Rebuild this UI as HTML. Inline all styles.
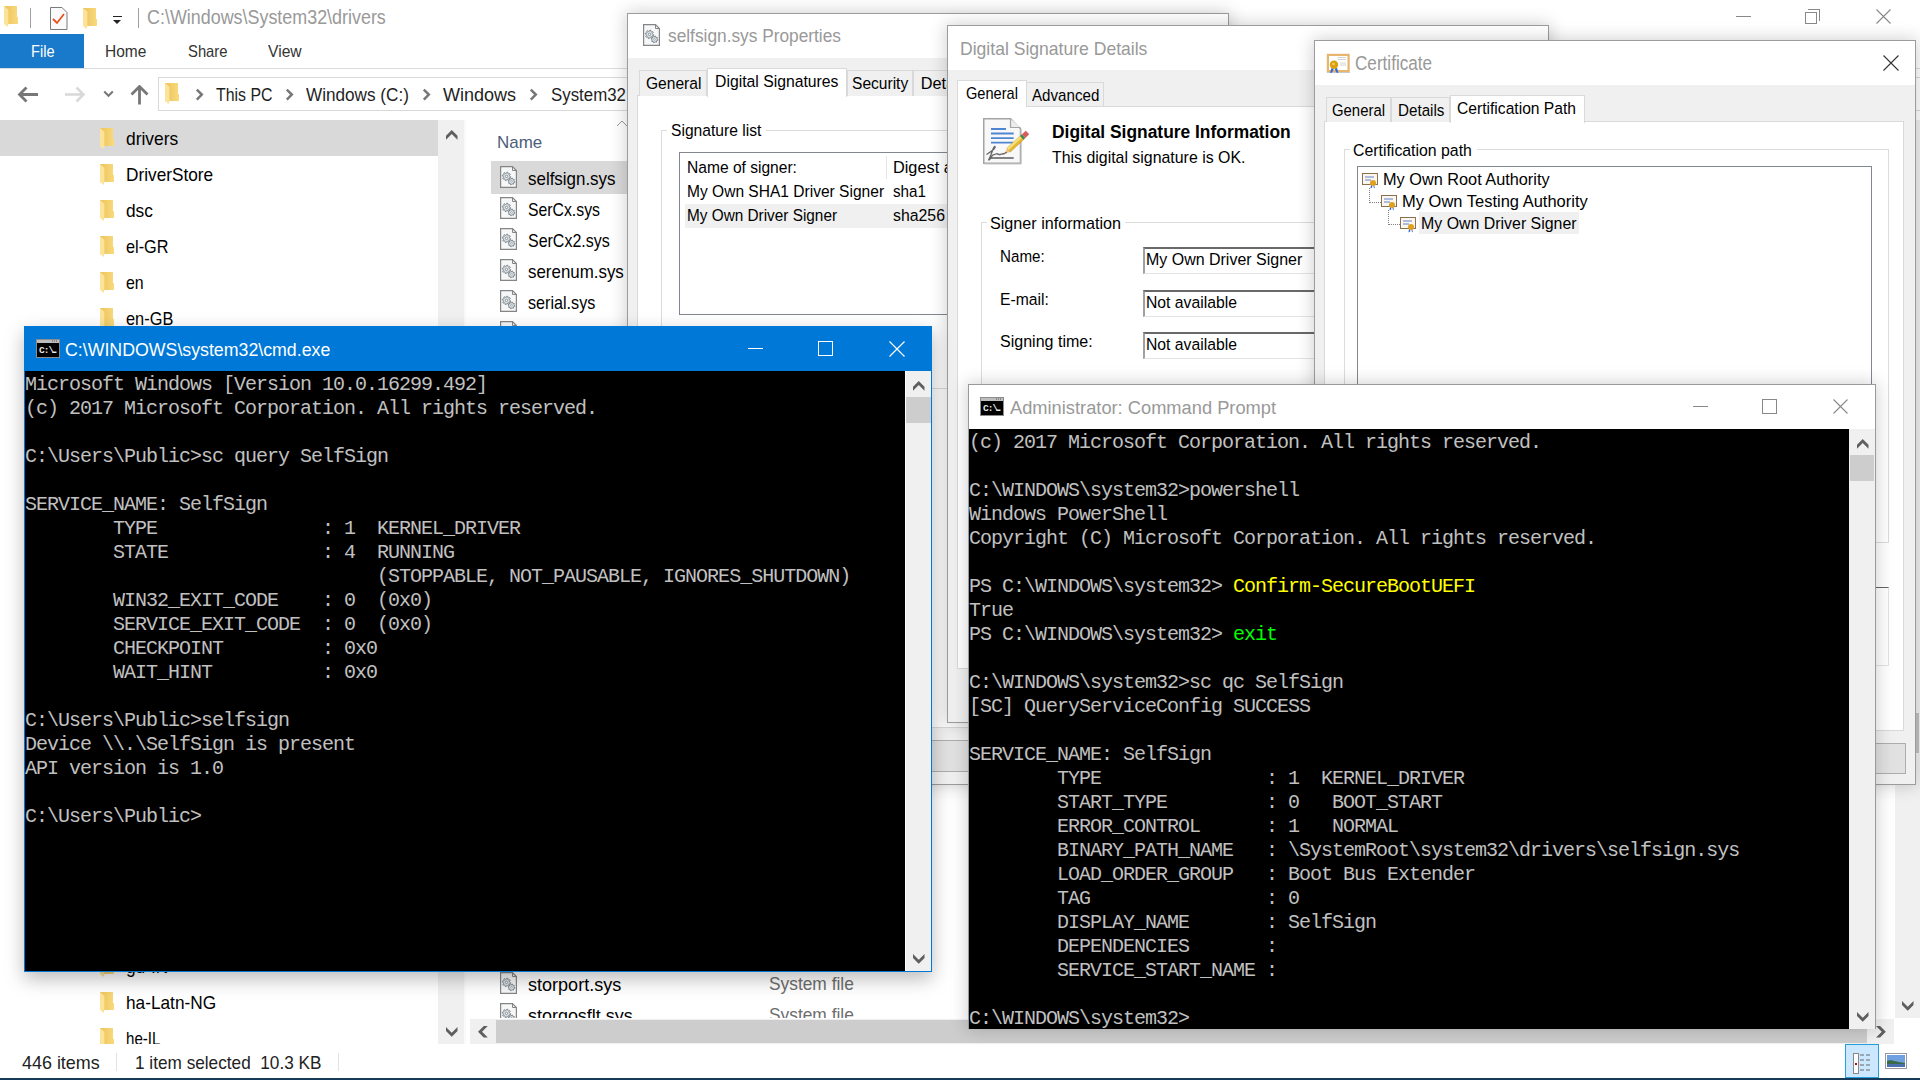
<!DOCTYPE html><html><head><meta charset="utf-8"><style>
*{box-sizing:border-box;margin:0;padding:0}
html,body{width:1920px;height:1080px;overflow:hidden;background:#fff;font-family:"Liberation Sans",sans-serif;color:#000}
.a{position:absolute}
.t{position:absolute;white-space:pre;line-height:1}
.con{position:absolute;font-family:"Liberation Mono",monospace;font-size:20px;letter-spacing:-1px;color:#c0c0c0;white-space:pre;line-height:24px}
.win{position:absolute;background:#f0f0f0;border:1px solid #9c9c9c;box-shadow:0 0 16px 1px rgba(0,0,0,.19);overflow:hidden}
</style></head><body>
<svg width="0" height="0" style="position:absolute"><defs><linearGradient id="fg" x1="0" x2="1"><stop offset="0" stop-color="#ebc35c"/><stop offset="1" stop-color="#f9da7c"/></linearGradient></defs></svg>
<svg class="a" style="left:4px;top:6px" width="15" height="22" viewBox="0 0 15 22"><path d="M0 0H13V11H14V18H0Z" fill="url(#fg)"/><path d="M0 0L4.6 4V17.6L3.6 21L0 18Z" fill="#fde39a"/><path d="M4.6 4V17.6" stroke="#f0cf70" stroke-width="0.6"/></svg>
<div class="a" style="left:30px;top:8px;width:1px;height:20px;background:#a0a0a0"></div>
<svg class="a" style="left:50px;top:7px" width="18" height="23" viewBox="0 0 18 23"><path d="M0.5 0.5H12L17 5.5V22.5H0.5Z" fill="#fafafa" stroke="#7a7a7a"/><path d="M3 12L7 16L14 7" stroke="#e8501e" stroke-width="1.8" fill="none"/></svg>
<svg class="a" style="left:83px;top:8px" width="15" height="22" viewBox="0 0 15 22"><path d="M0 0H13V11H14V18H0Z" fill="url(#fg)"/><path d="M0 0L4.6 4V17.6L3.6 21L0 18Z" fill="#fde39a"/><path d="M4.6 4V17.6" stroke="#f0cf70" stroke-width="0.6"/></svg>
<div class="a" style="left:113px;top:16px;width:9px;height:1.1999999999999993px;background:#222"></div>
<div class="a" style="left:113px;top:19.5px;width:0;height:0;border-left:4.5px solid transparent;border-right:4.5px solid transparent;border-top:4.5px solid #222"></div>
<div class="a" style="left:138px;top:8px;width:1px;height:20px;background:#a0a0a0"></div>
<div class="t" style="left:146.50px;top:7.89px;font-size:19.5px;color:#999;transform:scaleX(0.9182);transform-origin:0 0;">C:\Windows\System32\drivers</div>
<div class="a" style="left:1736px;top:16px;width:15px;height:1px;background:#888"></div>
<div class="a" style="left:1805px;top:12px;width:12px;height:12px;border:1px solid #888"></div>
<div class="a" style="left:1808px;top:9px;width:12px;height:12px;border-top:1px solid #888;border-right:1px solid #888"></div>
<svg class="a" style="left:1876px;top:9px" width="15" height="15" viewBox="0 0 15 15"><path d="M0.5 0.5L14.5 14.5M14.5 0.5L0.5 14.5" stroke="#888" stroke-width="1.1"/></svg>
<div class="a" style="left:0px;top:34px;width:84px;height:34px;background:#1979ca"></div>
<div class="t" style="left:30.50px;top:43.23px;font-size:16.5px;color:#fff;transform:scaleX(0.8833);transform-origin:0 0;">File</div>
<div class="t" style="left:104.50px;top:43.23px;font-size:16.5px;color:#333;transform:scaleX(0.9383);transform-origin:0 0;">Home</div>
<div class="t" style="left:187.50px;top:43.23px;font-size:16.5px;color:#333;transform:scaleX(0.8974);transform-origin:0 0;">Share</div>
<div class="t" style="left:268.00px;top:43.23px;font-size:16.5px;color:#333;transform:scaleX(0.9489);transform-origin:0 0;">View</div>
<div class="a" style="left:0px;top:68px;width:1920px;height:1px;background:#dadbdc"></div>
<svg class="a" style="left:17px;top:85px" width="140" height="22" viewBox="0 0 140 22"><path d="M3 9.5H21M9.5 2.5L2.5 9.5L9.5 16.5" stroke="#777" stroke-width="2.8" fill="none"/><path d="M48 9.5H66M59.5 2.5L66.5 9.5L59.5 16.5" stroke="#d9d9d9" stroke-width="2.6" fill="none"/><path d="M87.2 6.5L91.5 10.8L95.8 6.5" stroke="#777" stroke-width="2" fill="none"/><path d="M122.5 19.5V2M114.5 9.5L122.5 1.5L130.5 9.5" stroke="#777" stroke-width="2.8" fill="none"/></svg>
<div class="a" style="left:158px;top:77px;width:1802px;height:34px;border:1px solid #d9d9d9"></div>
<svg class="a" style="left:165px;top:83px" width="15" height="22" viewBox="0 0 15 22"><path d="M0 0H13V11H14V18H0Z" fill="url(#fg)"/><path d="M0 0L4.6 4V17.6L3.6 21L0 18Z" fill="#fde39a"/><path d="M4.6 4V17.6" stroke="#f0cf70" stroke-width="0.6"/></svg>
<svg class="a" style="left:195px;top:88px" width="10" height="13" viewBox="0 0 10 13"><path d="M1.8 1.6L6.8 6.6L1.8 11.6" stroke="#777" stroke-width="2.5" fill="none"/></svg>
<svg class="a" style="left:284.5px;top:88px" width="10" height="13" viewBox="0 0 10 13"><path d="M1.8 1.6L6.8 6.6L1.8 11.6" stroke="#777" stroke-width="2.5" fill="none"/></svg>
<svg class="a" style="left:422px;top:88px" width="10" height="13" viewBox="0 0 10 13"><path d="M1.8 1.6L6.8 6.6L1.8 11.6" stroke="#777" stroke-width="2.5" fill="none"/></svg>
<svg class="a" style="left:529px;top:88px" width="10" height="13" viewBox="0 0 10 13"><path d="M1.8 1.6L6.8 6.6L1.8 11.6" stroke="#777" stroke-width="2.5" fill="none"/></svg>
<div class="t" style="left:216.00px;top:86.09px;font-size:18.8px;color:#1e1e1e;transform:scaleX(0.8448);transform-origin:0 0;">This PC</div>
<div class="t" style="left:306.40px;top:86.09px;font-size:18.8px;color:#1e1e1e;transform:scaleX(0.9131);transform-origin:0 0;">Windows (C:)</div>
<div class="t" style="left:443.10px;top:86.09px;font-size:18.8px;color:#1e1e1e;transform:scaleX(0.9596);transform-origin:0 0;">Windows</div>
<div class="t" style="left:550.60px;top:86.09px;font-size:18.8px;color:#1e1e1e;transform:scaleX(0.8970);transform-origin:0 0;">System32</div>
<div class="a" style="left:0px;top:120px;width:438px;height:36px;background:#d9d9d9"></div>
<div class="a" style="left:438px;top:120px;width:26px;height:925px;background:#f0f0f0"></div>
<div class="a" style="left:464px;top:120px;width:2px;height:925px;background:#fafafa"></div>
<svg class="a" style="left:446px;top:130px" width="12" height="10" viewBox="0 0 12 10"><path d="M0 5.75L5.75 0L11.5 5.75V9.8L5.75 4.05L0 9.8Z" fill="#5f5f5f"/></svg>
<svg class="a" style="left:446px;top:1027px" width="12" height="10" viewBox="0 0 12 10"><path d="M0 4.05L5.75 9.8L11.5 4.05V0L5.75 5.75L0 0Z" fill="#5f5f5f"/></svg>
<svg class="a" style="left:100px;top:128px" width="15" height="22" viewBox="0 0 15 22"><path d="M0 0H13V11H14V18H0Z" fill="url(#fg)"/><path d="M0 0L4.6 4V17.6L3.6 21L0 18Z" fill="#fde39a"/><path d="M4.6 4V17.6" stroke="#f0cf70" stroke-width="0.6"/></svg>
<div class="t" style="left:125.50px;top:128.82px;font-size:19px;color:#000;transform:scaleX(0.9158);transform-origin:0 0;">drivers</div>
<svg class="a" style="left:100px;top:164px" width="15" height="22" viewBox="0 0 15 22"><path d="M0 0H13V11H14V18H0Z" fill="url(#fg)"/><path d="M0 0L4.6 4V17.6L3.6 21L0 18Z" fill="#fde39a"/><path d="M4.6 4V17.6" stroke="#f0cf70" stroke-width="0.6"/></svg>
<div class="t" style="left:125.50px;top:164.82px;font-size:19px;color:#000;transform:scaleX(0.9075);transform-origin:0 0;">DriverStore</div>
<svg class="a" style="left:100px;top:200px" width="15" height="22" viewBox="0 0 15 22"><path d="M0 0H13V11H14V18H0Z" fill="url(#fg)"/><path d="M0 0L4.6 4V17.6L3.6 21L0 18Z" fill="#fde39a"/><path d="M4.6 4V17.6" stroke="#f0cf70" stroke-width="0.6"/></svg>
<div class="t" style="left:125.50px;top:200.82px;font-size:19px;color:#000;transform:scaleX(0.9105);transform-origin:0 0;">dsc</div>
<svg class="a" style="left:100px;top:236px" width="15" height="22" viewBox="0 0 15 22"><path d="M0 0H13V11H14V18H0Z" fill="url(#fg)"/><path d="M0 0L4.6 4V17.6L3.6 21L0 18Z" fill="#fde39a"/><path d="M4.6 4V17.6" stroke="#f0cf70" stroke-width="0.6"/></svg>
<div class="t" style="left:125.50px;top:236.82px;font-size:19px;color:#000;transform:scaleX(0.8562);transform-origin:0 0;">el-GR</div>
<svg class="a" style="left:100px;top:272px" width="15" height="22" viewBox="0 0 15 22"><path d="M0 0H13V11H14V18H0Z" fill="url(#fg)"/><path d="M0 0L4.6 4V17.6L3.6 21L0 18Z" fill="#fde39a"/><path d="M4.6 4V17.6" stroke="#f0cf70" stroke-width="0.6"/></svg>
<div class="t" style="left:125.50px;top:272.82px;font-size:19px;color:#000;transform:scaleX(0.8374);transform-origin:0 0;">en</div>
<svg class="a" style="left:100px;top:308px" width="15" height="22" viewBox="0 0 15 22"><path d="M0 0H13V11H14V18H0Z" fill="url(#fg)"/><path d="M0 0L4.6 4V17.6L3.6 21L0 18Z" fill="#fde39a"/><path d="M4.6 4V17.6" stroke="#f0cf70" stroke-width="0.6"/></svg>
<div class="t" style="left:125.50px;top:308.82px;font-size:19px;color:#000;transform:scaleX(0.8614);transform-origin:0 0;">en-GB</div>
<svg class="a" style="left:100px;top:956px" width="15" height="22" viewBox="0 0 15 22"><path d="M0 0H13V11H14V18H0Z" fill="url(#fg)"/><path d="M0 0L4.6 4V17.6L3.6 21L0 18Z" fill="#fde39a"/><path d="M4.6 4V17.6" stroke="#f0cf70" stroke-width="0.6"/></svg>
<div class="t" style="left:125.50px;top:956.82px;font-size:19px;color:#000;transform:scaleX(0.91);transform-origin:0 0">gu-IN</div>
<svg class="a" style="left:100px;top:992px" width="15" height="22" viewBox="0 0 15 22"><path d="M0 0H13V11H14V18H0Z" fill="url(#fg)"/><path d="M0 0L4.6 4V17.6L3.6 21L0 18Z" fill="#fde39a"/><path d="M4.6 4V17.6" stroke="#f0cf70" stroke-width="0.6"/></svg>
<div class="t" style="left:125.50px;top:992.82px;font-size:19px;color:#000;transform:scaleX(0.9076);transform-origin:0 0;">ha-Latn-NG</div>
<svg class="a" style="left:100px;top:1028px" width="15" height="22" viewBox="0 0 15 22"><path d="M0 0H13V11H14V18H0Z" fill="url(#fg)"/><path d="M0 0L4.6 4V17.6L3.6 21L0 18Z" fill="#fde39a"/><path d="M4.6 4V17.6" stroke="#f0cf70" stroke-width="0.6"/></svg>
<div class="t" style="left:125.50px;top:1028.82px;font-size:19px;color:#000;transform:scaleX(0.7941);transform-origin:0 0;">he-IL</div>
<div class="a" style="left:0px;top:1044px;width:468px;height:34px;background:#fff"></div>
<div class="t" style="left:497.20px;top:134.21px;font-size:17px;color:#4c607a;transform:scaleX(0.9967);transform-origin:0 0;">Name</div>
<svg class="a" style="left:616px;top:119px" width="12" height="8" viewBox="0 0 12 8"><path d="M1 7L6 2L11 7" stroke="#999" stroke-width="1" fill="none"/></svg>
<div class="a" style="left:491px;top:161px;width:169px;height:33px;background:#d9d9d9"></div>
<svg class="a" style="left:500px;top:166px" width="18" height="23" viewBox="0 0 18 23"><path d="M0.6 0.6H12.5L16.4 4.5V21.4H0.6Z" fill="#f6f7f8" stroke="#858585" stroke-width="1.2"/><path d="M12.5 0.6V4.5H16.4" fill="none" stroke="#858585" stroke-width="1"/><path d="M10.78 10.82 L10.61 11.65 L9.23 11.86 L8.90 12.37 L9.23 13.72 L8.53 14.19 L7.40 13.37 L6.80 13.49 L6.08 14.68 L5.25 14.51 L5.04 13.13 L4.53 12.80 L3.18 13.13 L2.71 12.43 L3.53 11.30 L3.41 10.70 L2.22 9.98 L2.39 9.15 L3.77 8.94 L4.10 8.43 L3.77 7.08 L4.47 6.61 L5.60 7.43 L6.20 7.31 L6.92 6.12 L7.75 6.29 L7.96 7.67 L8.47 8.00 L9.82 7.67 L10.29 8.37 L9.47 9.50 L9.59 10.10Z" fill="#d6e4ee" stroke="#7c7c7c" stroke-width="0.9"/><circle cx="6.5" cy="10.4" r="1.2" fill="#fff" stroke="#7c7c7c" stroke-width="0.8"/><path d="M14.88 15.73 L14.75 16.39 L13.70 16.58 L13.43 16.99 L13.66 18.03 L13.10 18.40 L12.23 17.79 L11.75 17.89 L11.17 18.78 L10.51 18.65 L10.32 17.60 L9.91 17.33 L8.87 17.56 L8.50 17.00 L9.11 16.13 L9.01 15.65 L8.12 15.07 L8.25 14.41 L9.30 14.22 L9.57 13.81 L9.34 12.77 L9.90 12.40 L10.77 13.01 L11.25 12.91 L11.83 12.02 L12.49 12.15 L12.68 13.20 L13.09 13.47 L14.13 13.24 L14.50 13.80 L13.89 14.67 L13.99 15.15Z" fill="#d6e8f4" stroke="#7c7c7c" stroke-width="0.9"/><circle cx="11.5" cy="15.4" r="0.9" fill="#fff" stroke="#888" stroke-width="0.6"/></svg>
<div class="t" style="left:527.50px;top:168.82px;font-size:19px;color:#000;transform:scaleX(0.8912);transform-origin:0 0;">selfsign.sys</div>
<svg class="a" style="left:500px;top:197px" width="18" height="23" viewBox="0 0 18 23"><path d="M0.6 0.6H12.5L16.4 4.5V21.4H0.6Z" fill="#f6f7f8" stroke="#858585" stroke-width="1.2"/><path d="M12.5 0.6V4.5H16.4" fill="none" stroke="#858585" stroke-width="1"/><path d="M10.78 10.82 L10.61 11.65 L9.23 11.86 L8.90 12.37 L9.23 13.72 L8.53 14.19 L7.40 13.37 L6.80 13.49 L6.08 14.68 L5.25 14.51 L5.04 13.13 L4.53 12.80 L3.18 13.13 L2.71 12.43 L3.53 11.30 L3.41 10.70 L2.22 9.98 L2.39 9.15 L3.77 8.94 L4.10 8.43 L3.77 7.08 L4.47 6.61 L5.60 7.43 L6.20 7.31 L6.92 6.12 L7.75 6.29 L7.96 7.67 L8.47 8.00 L9.82 7.67 L10.29 8.37 L9.47 9.50 L9.59 10.10Z" fill="#d6e4ee" stroke="#7c7c7c" stroke-width="0.9"/><circle cx="6.5" cy="10.4" r="1.2" fill="#fff" stroke="#7c7c7c" stroke-width="0.8"/><path d="M14.88 15.73 L14.75 16.39 L13.70 16.58 L13.43 16.99 L13.66 18.03 L13.10 18.40 L12.23 17.79 L11.75 17.89 L11.17 18.78 L10.51 18.65 L10.32 17.60 L9.91 17.33 L8.87 17.56 L8.50 17.00 L9.11 16.13 L9.01 15.65 L8.12 15.07 L8.25 14.41 L9.30 14.22 L9.57 13.81 L9.34 12.77 L9.90 12.40 L10.77 13.01 L11.25 12.91 L11.83 12.02 L12.49 12.15 L12.68 13.20 L13.09 13.47 L14.13 13.24 L14.50 13.80 L13.89 14.67 L13.99 15.15Z" fill="#d6e8f4" stroke="#7c7c7c" stroke-width="0.9"/><circle cx="11.5" cy="15.4" r="0.9" fill="#fff" stroke="#888" stroke-width="0.6"/></svg>
<div class="t" style="left:527.50px;top:199.82px;font-size:19px;color:#000;transform:scaleX(0.8308);transform-origin:0 0;">SerCx.sys</div>
<svg class="a" style="left:500px;top:228px" width="18" height="23" viewBox="0 0 18 23"><path d="M0.6 0.6H12.5L16.4 4.5V21.4H0.6Z" fill="#f6f7f8" stroke="#858585" stroke-width="1.2"/><path d="M12.5 0.6V4.5H16.4" fill="none" stroke="#858585" stroke-width="1"/><path d="M10.78 10.82 L10.61 11.65 L9.23 11.86 L8.90 12.37 L9.23 13.72 L8.53 14.19 L7.40 13.37 L6.80 13.49 L6.08 14.68 L5.25 14.51 L5.04 13.13 L4.53 12.80 L3.18 13.13 L2.71 12.43 L3.53 11.30 L3.41 10.70 L2.22 9.98 L2.39 9.15 L3.77 8.94 L4.10 8.43 L3.77 7.08 L4.47 6.61 L5.60 7.43 L6.20 7.31 L6.92 6.12 L7.75 6.29 L7.96 7.67 L8.47 8.00 L9.82 7.67 L10.29 8.37 L9.47 9.50 L9.59 10.10Z" fill="#d6e4ee" stroke="#7c7c7c" stroke-width="0.9"/><circle cx="6.5" cy="10.4" r="1.2" fill="#fff" stroke="#7c7c7c" stroke-width="0.8"/><path d="M14.88 15.73 L14.75 16.39 L13.70 16.58 L13.43 16.99 L13.66 18.03 L13.10 18.40 L12.23 17.79 L11.75 17.89 L11.17 18.78 L10.51 18.65 L10.32 17.60 L9.91 17.33 L8.87 17.56 L8.50 17.00 L9.11 16.13 L9.01 15.65 L8.12 15.07 L8.25 14.41 L9.30 14.22 L9.57 13.81 L9.34 12.77 L9.90 12.40 L10.77 13.01 L11.25 12.91 L11.83 12.02 L12.49 12.15 L12.68 13.20 L13.09 13.47 L14.13 13.24 L14.50 13.80 L13.89 14.67 L13.99 15.15Z" fill="#d6e8f4" stroke="#7c7c7c" stroke-width="0.9"/><circle cx="11.5" cy="15.4" r="0.9" fill="#fff" stroke="#888" stroke-width="0.6"/></svg>
<div class="t" style="left:527.50px;top:230.82px;font-size:19px;color:#000;transform:scaleX(0.8411);transform-origin:0 0;">SerCx2.sys</div>
<svg class="a" style="left:500px;top:259px" width="18" height="23" viewBox="0 0 18 23"><path d="M0.6 0.6H12.5L16.4 4.5V21.4H0.6Z" fill="#f6f7f8" stroke="#858585" stroke-width="1.2"/><path d="M12.5 0.6V4.5H16.4" fill="none" stroke="#858585" stroke-width="1"/><path d="M10.78 10.82 L10.61 11.65 L9.23 11.86 L8.90 12.37 L9.23 13.72 L8.53 14.19 L7.40 13.37 L6.80 13.49 L6.08 14.68 L5.25 14.51 L5.04 13.13 L4.53 12.80 L3.18 13.13 L2.71 12.43 L3.53 11.30 L3.41 10.70 L2.22 9.98 L2.39 9.15 L3.77 8.94 L4.10 8.43 L3.77 7.08 L4.47 6.61 L5.60 7.43 L6.20 7.31 L6.92 6.12 L7.75 6.29 L7.96 7.67 L8.47 8.00 L9.82 7.67 L10.29 8.37 L9.47 9.50 L9.59 10.10Z" fill="#d6e4ee" stroke="#7c7c7c" stroke-width="0.9"/><circle cx="6.5" cy="10.4" r="1.2" fill="#fff" stroke="#7c7c7c" stroke-width="0.8"/><path d="M14.88 15.73 L14.75 16.39 L13.70 16.58 L13.43 16.99 L13.66 18.03 L13.10 18.40 L12.23 17.79 L11.75 17.89 L11.17 18.78 L10.51 18.65 L10.32 17.60 L9.91 17.33 L8.87 17.56 L8.50 17.00 L9.11 16.13 L9.01 15.65 L8.12 15.07 L8.25 14.41 L9.30 14.22 L9.57 13.81 L9.34 12.77 L9.90 12.40 L10.77 13.01 L11.25 12.91 L11.83 12.02 L12.49 12.15 L12.68 13.20 L13.09 13.47 L14.13 13.24 L14.50 13.80 L13.89 14.67 L13.99 15.15Z" fill="#d6e8f4" stroke="#7c7c7c" stroke-width="0.9"/><circle cx="11.5" cy="15.4" r="0.9" fill="#fff" stroke="#888" stroke-width="0.6"/></svg>
<div class="t" style="left:527.50px;top:261.82px;font-size:19px;color:#000;transform:scaleX(0.8897);transform-origin:0 0;">serenum.sys</div>
<svg class="a" style="left:500px;top:290px" width="18" height="23" viewBox="0 0 18 23"><path d="M0.6 0.6H12.5L16.4 4.5V21.4H0.6Z" fill="#f6f7f8" stroke="#858585" stroke-width="1.2"/><path d="M12.5 0.6V4.5H16.4" fill="none" stroke="#858585" stroke-width="1"/><path d="M10.78 10.82 L10.61 11.65 L9.23 11.86 L8.90 12.37 L9.23 13.72 L8.53 14.19 L7.40 13.37 L6.80 13.49 L6.08 14.68 L5.25 14.51 L5.04 13.13 L4.53 12.80 L3.18 13.13 L2.71 12.43 L3.53 11.30 L3.41 10.70 L2.22 9.98 L2.39 9.15 L3.77 8.94 L4.10 8.43 L3.77 7.08 L4.47 6.61 L5.60 7.43 L6.20 7.31 L6.92 6.12 L7.75 6.29 L7.96 7.67 L8.47 8.00 L9.82 7.67 L10.29 8.37 L9.47 9.50 L9.59 10.10Z" fill="#d6e4ee" stroke="#7c7c7c" stroke-width="0.9"/><circle cx="6.5" cy="10.4" r="1.2" fill="#fff" stroke="#7c7c7c" stroke-width="0.8"/><path d="M14.88 15.73 L14.75 16.39 L13.70 16.58 L13.43 16.99 L13.66 18.03 L13.10 18.40 L12.23 17.79 L11.75 17.89 L11.17 18.78 L10.51 18.65 L10.32 17.60 L9.91 17.33 L8.87 17.56 L8.50 17.00 L9.11 16.13 L9.01 15.65 L8.12 15.07 L8.25 14.41 L9.30 14.22 L9.57 13.81 L9.34 12.77 L9.90 12.40 L10.77 13.01 L11.25 12.91 L11.83 12.02 L12.49 12.15 L12.68 13.20 L13.09 13.47 L14.13 13.24 L14.50 13.80 L13.89 14.67 L13.99 15.15Z" fill="#d6e8f4" stroke="#7c7c7c" stroke-width="0.9"/><circle cx="11.5" cy="15.4" r="0.9" fill="#fff" stroke="#888" stroke-width="0.6"/></svg>
<div class="t" style="left:527.50px;top:292.82px;font-size:19px;color:#000;transform:scaleX(0.8499);transform-origin:0 0;">serial.sys</div>
<svg class="a" style="left:500px;top:321px" width="18" height="23" viewBox="0 0 18 23"><path d="M0.6 0.6H12.5L16.4 4.5V21.4H0.6Z" fill="#f6f7f8" stroke="#858585" stroke-width="1.2"/><path d="M12.5 0.6V4.5H16.4" fill="none" stroke="#858585" stroke-width="1"/><path d="M10.78 10.82 L10.61 11.65 L9.23 11.86 L8.90 12.37 L9.23 13.72 L8.53 14.19 L7.40 13.37 L6.80 13.49 L6.08 14.68 L5.25 14.51 L5.04 13.13 L4.53 12.80 L3.18 13.13 L2.71 12.43 L3.53 11.30 L3.41 10.70 L2.22 9.98 L2.39 9.15 L3.77 8.94 L4.10 8.43 L3.77 7.08 L4.47 6.61 L5.60 7.43 L6.20 7.31 L6.92 6.12 L7.75 6.29 L7.96 7.67 L8.47 8.00 L9.82 7.67 L10.29 8.37 L9.47 9.50 L9.59 10.10Z" fill="#d6e4ee" stroke="#7c7c7c" stroke-width="0.9"/><circle cx="6.5" cy="10.4" r="1.2" fill="#fff" stroke="#7c7c7c" stroke-width="0.8"/><path d="M14.88 15.73 L14.75 16.39 L13.70 16.58 L13.43 16.99 L13.66 18.03 L13.10 18.40 L12.23 17.79 L11.75 17.89 L11.17 18.78 L10.51 18.65 L10.32 17.60 L9.91 17.33 L8.87 17.56 L8.50 17.00 L9.11 16.13 L9.01 15.65 L8.12 15.07 L8.25 14.41 L9.30 14.22 L9.57 13.81 L9.34 12.77 L9.90 12.40 L10.77 13.01 L11.25 12.91 L11.83 12.02 L12.49 12.15 L12.68 13.20 L13.09 13.47 L14.13 13.24 L14.50 13.80 L13.89 14.67 L13.99 15.15Z" fill="#d6e8f4" stroke="#7c7c7c" stroke-width="0.9"/><circle cx="11.5" cy="15.4" r="0.9" fill="#fff" stroke="#888" stroke-width="0.6"/></svg>
<svg class="a" style="left:500px;top:972px" width="18" height="23" viewBox="0 0 18 23"><path d="M0.6 0.6H12.5L16.4 4.5V21.4H0.6Z" fill="#f6f7f8" stroke="#858585" stroke-width="1.2"/><path d="M12.5 0.6V4.5H16.4" fill="none" stroke="#858585" stroke-width="1"/><path d="M10.78 10.82 L10.61 11.65 L9.23 11.86 L8.90 12.37 L9.23 13.72 L8.53 14.19 L7.40 13.37 L6.80 13.49 L6.08 14.68 L5.25 14.51 L5.04 13.13 L4.53 12.80 L3.18 13.13 L2.71 12.43 L3.53 11.30 L3.41 10.70 L2.22 9.98 L2.39 9.15 L3.77 8.94 L4.10 8.43 L3.77 7.08 L4.47 6.61 L5.60 7.43 L6.20 7.31 L6.92 6.12 L7.75 6.29 L7.96 7.67 L8.47 8.00 L9.82 7.67 L10.29 8.37 L9.47 9.50 L9.59 10.10Z" fill="#d6e4ee" stroke="#7c7c7c" stroke-width="0.9"/><circle cx="6.5" cy="10.4" r="1.2" fill="#fff" stroke="#7c7c7c" stroke-width="0.8"/><path d="M14.88 15.73 L14.75 16.39 L13.70 16.58 L13.43 16.99 L13.66 18.03 L13.10 18.40 L12.23 17.79 L11.75 17.89 L11.17 18.78 L10.51 18.65 L10.32 17.60 L9.91 17.33 L8.87 17.56 L8.50 17.00 L9.11 16.13 L9.01 15.65 L8.12 15.07 L8.25 14.41 L9.30 14.22 L9.57 13.81 L9.34 12.77 L9.90 12.40 L10.77 13.01 L11.25 12.91 L11.83 12.02 L12.49 12.15 L12.68 13.20 L13.09 13.47 L14.13 13.24 L14.50 13.80 L13.89 14.67 L13.99 15.15Z" fill="#d6e8f4" stroke="#7c7c7c" stroke-width="0.9"/><circle cx="11.5" cy="15.4" r="0.9" fill="#fff" stroke="#888" stroke-width="0.6"/></svg>
<div class="t" style="left:527.50px;top:974.82px;font-size:19px;color:#000;transform:scaleX(0.9493);transform-origin:0 0;">storport.sys</div>
<div class="t" style="left:769.20px;top:974.32px;font-size:19px;color:#6d6d6d;transform:scaleX(0.9127);transform-origin:0 0;">System file</div>
<svg class="a" style="left:500px;top:1003px" width="18" height="23" viewBox="0 0 18 23"><path d="M0.6 0.6H12.5L16.4 4.5V21.4H0.6Z" fill="#f6f7f8" stroke="#858585" stroke-width="1.2"/><path d="M12.5 0.6V4.5H16.4" fill="none" stroke="#858585" stroke-width="1"/><path d="M10.78 10.82 L10.61 11.65 L9.23 11.86 L8.90 12.37 L9.23 13.72 L8.53 14.19 L7.40 13.37 L6.80 13.49 L6.08 14.68 L5.25 14.51 L5.04 13.13 L4.53 12.80 L3.18 13.13 L2.71 12.43 L3.53 11.30 L3.41 10.70 L2.22 9.98 L2.39 9.15 L3.77 8.94 L4.10 8.43 L3.77 7.08 L4.47 6.61 L5.60 7.43 L6.20 7.31 L6.92 6.12 L7.75 6.29 L7.96 7.67 L8.47 8.00 L9.82 7.67 L10.29 8.37 L9.47 9.50 L9.59 10.10Z" fill="#d6e4ee" stroke="#7c7c7c" stroke-width="0.9"/><circle cx="6.5" cy="10.4" r="1.2" fill="#fff" stroke="#7c7c7c" stroke-width="0.8"/><path d="M14.88 15.73 L14.75 16.39 L13.70 16.58 L13.43 16.99 L13.66 18.03 L13.10 18.40 L12.23 17.79 L11.75 17.89 L11.17 18.78 L10.51 18.65 L10.32 17.60 L9.91 17.33 L8.87 17.56 L8.50 17.00 L9.11 16.13 L9.01 15.65 L8.12 15.07 L8.25 14.41 L9.30 14.22 L9.57 13.81 L9.34 12.77 L9.90 12.40 L10.77 13.01 L11.25 12.91 L11.83 12.02 L12.49 12.15 L12.68 13.20 L13.09 13.47 L14.13 13.24 L14.50 13.80 L13.89 14.67 L13.99 15.15Z" fill="#d6e8f4" stroke="#7c7c7c" stroke-width="0.9"/><circle cx="11.5" cy="15.4" r="0.9" fill="#fff" stroke="#888" stroke-width="0.6"/></svg>
<div class="t" style="left:527.50px;top:1005.82px;font-size:19px;color:#000;transform:scaleX(0.9444);transform-origin:0 0;">storqosflt.sys</div>
<div class="t" style="left:769.20px;top:1005.32px;font-size:19px;color:#6d6d6d;transform:scaleX(0.9127);transform-origin:0 0;">System file</div>
<div class="a" style="left:468px;top:1018px;width:1452px;height:62px;background:#fff"></div>
<div class="a" style="left:470px;top:1019px;width:1424px;height:25px;background:#f0f0f0"></div>
<div class="a" style="left:496px;top:1020px;width:1371px;height:23px;background:#cdcdcd"></div>
<svg class="a" style="left:478px;top:1026px" width="10" height="12" viewBox="0 0 10 12"><path d="M5.75 0L0 5.75L5.75 11.5H9.8L4.05 5.75L9.8 0Z" fill="#5f5f5f"/></svg>
<svg class="a" style="left:1876px;top:1026px" width="10" height="12" viewBox="0 0 10 12"><path d="M4.05 0L9.8 5.75L4.05 11.5H0L5.75 5.75L0 0Z" fill="#5f5f5f"/></svg>
<div class="a" style="left:1895px;top:120px;width:25px;height:898px;background:#f0f0f0"></div>
<div class="a" style="left:1896px;top:713px;width:23px;height:40px;background:#c2c2c2"></div>
<svg class="a" style="left:1902px;top:1001px" width="12" height="10" viewBox="0 0 12 10"><path d="M0 4.05L5.75 9.8L11.5 4.05V0L5.75 5.75L0 0Z" fill="#5f5f5f"/></svg>
<div class="t" style="left:21.90px;top:1052.67px;font-size:19px;color:#222;transform:scaleX(0.9434);transform-origin:0 0;">446 items</div>
<div class="a" style="left:116px;top:1053px;width:1px;height:18px;background:#e3e3e3"></div>
<div class="t" style="left:135.40px;top:1052.67px;font-size:19px;color:#222;transform:scaleX(0.9055);transform-origin:0 0;">1 item selected  10.3 KB</div>
<div class="a" style="left:338px;top:1053px;width:1px;height:18px;background:#e3e3e3"></div>
<div class="a" style="left:1845px;top:1044px;width:34px;height:34px;background:#cce8ff;border:1px solid #26a0da"></div>
<svg class="a" style="left:1852px;top:1052px" width="22" height="22" viewBox="0 0 22 22"><rect x="1.5" y="1.5" width="5" height="20" fill="#fff" stroke="#888"/><path d="M8 3H12M14 3H18M8 8H12M14 8H18M8 13H12M14 13H18M8 18H12M14 18H18" stroke="#666" stroke-width="1.2"/><rect x="3" y="11" width="2" height="2" fill="#c00"/></svg>
<svg class="a" style="left:1885px;top:1053px" width="22" height="16" viewBox="0 0 22 16"><rect x="0.5" y="0.5" width="21" height="15" fill="#fff" stroke="#999"/><rect x="2" y="2" width="18" height="12" fill="#6fa0e0"/><path d="M2 8C6 6 10 9 20 10V14H2Z" fill="#3a6a48"/><rect x="2" y="11" width="18" height="3" fill="#4a70b0"/></svg>
<div class="a" style="left:0px;top:1078px;width:1920px;height:2px;background:#163a58"></div>
<div class="win" style="left:627px;top:13px;width:602px;height:772px">
<div class="a" style="left:0px;top:0px;width:600px;height:44px;background:#fff"></div>
<svg class="a" style="left:15px;top:10px" width="18" height="23" viewBox="0 0 18 23"><path d="M0.6 0.6H12.5L16.4 4.5V21.4H0.6Z" fill="#f6f7f8" stroke="#858585" stroke-width="1.2"/><path d="M12.5 0.6V4.5H16.4" fill="none" stroke="#858585" stroke-width="1"/><path d="M10.78 10.82 L10.61 11.65 L9.23 11.86 L8.90 12.37 L9.23 13.72 L8.53 14.19 L7.40 13.37 L6.80 13.49 L6.08 14.68 L5.25 14.51 L5.04 13.13 L4.53 12.80 L3.18 13.13 L2.71 12.43 L3.53 11.30 L3.41 10.70 L2.22 9.98 L2.39 9.15 L3.77 8.94 L4.10 8.43 L3.77 7.08 L4.47 6.61 L5.60 7.43 L6.20 7.31 L6.92 6.12 L7.75 6.29 L7.96 7.67 L8.47 8.00 L9.82 7.67 L10.29 8.37 L9.47 9.50 L9.59 10.10Z" fill="#d6e4ee" stroke="#7c7c7c" stroke-width="0.9"/><circle cx="6.5" cy="10.4" r="1.2" fill="#fff" stroke="#7c7c7c" stroke-width="0.8"/><path d="M14.88 15.73 L14.75 16.39 L13.70 16.58 L13.43 16.99 L13.66 18.03 L13.10 18.40 L12.23 17.79 L11.75 17.89 L11.17 18.78 L10.51 18.65 L10.32 17.60 L9.91 17.33 L8.87 17.56 L8.50 17.00 L9.11 16.13 L9.01 15.65 L8.12 15.07 L8.25 14.41 L9.30 14.22 L9.57 13.81 L9.34 12.77 L9.90 12.40 L10.77 13.01 L11.25 12.91 L11.83 12.02 L12.49 12.15 L12.68 13.20 L13.09 13.47 L14.13 13.24 L14.50 13.80 L13.89 14.67 L13.99 15.15Z" fill="#d6e8f4" stroke="#7c7c7c" stroke-width="0.9"/><circle cx="11.5" cy="15.4" r="0.9" fill="#fff" stroke="#888" stroke-width="0.6"/></svg>
<div class="t" style="left:40.30px;top:13.26px;font-size:18px;color:#999;transform:scaleX(0.9606);transform-origin:0 0;">selfsign.sys Properties</div>
<div class="a" style="left:9px;top:81px;width:582px;height:633px;background:#fff;border:1px solid #d9d9d9"></div>
<div class="a" style="left:11px;top:56px;width:68px;height:26px;background:#f0f0f0;border:1px solid #d9d9d9;border-bottom:none"></div>
<div class="a" style="left:79px;top:54px;width:140px;height:29px;background:#fff;border:1px solid #d9d9d9;border-bottom:none"></div>
<div class="a" style="left:219px;top:56px;width:66px;height:26px;background:#f0f0f0;border:1px solid #d9d9d9;border-bottom:none"></div>
<div class="a" style="left:285px;top:56px;width:77px;height:26px;background:#f0f0f0;border:1px solid #d9d9d9;border-bottom:none"></div>
<div class="t" style="left:17.80px;top:60.90px;font-size:16.3px;color:#000;transform:scaleX(0.9571);transform-origin:0 0;">General</div>
<div class="t" style="left:86.70px;top:58.90px;font-size:16.3px;color:#000;transform:scaleX(0.9675);transform-origin:0 0;">Digital Signatures</div>
<div class="t" style="left:223.70px;top:60.90px;font-size:16.3px;color:#000;transform:scaleX(0.9561);transform-origin:0 0;">Security</div>
<div class="t" style="left:292.80px;top:60.90px;font-size:16.3px;color:#000;">Details</div>
<div class="a" style="left:33px;top:116px;width:539px;height:259px;border:1px solid #dcdcdc"></div>
<div class="a" style="left:39px;top:108px;width:99px;height:18px;background:#fff"></div>
<div class="t" style="left:42.70px;top:107.80px;font-size:16.3px;color:#000;transform:scaleX(0.9595);transform-origin:0 0;">Signature list</div>
<div class="a" style="left:51px;top:138px;width:521px;height:163px;background:#fff;border:1px solid #828790"></div>
<div class="t" style="left:59.30px;top:145.20px;font-size:16.3px;color:#000;transform:scaleX(0.9567);transform-origin:0 0;">Name of signer:</div>
<div class="a" style="left:258px;top:142px;width:1px;height:23px;background:#e5e5e5"></div>
<div class="t" style="left:265.00px;top:145.20px;font-size:16.3px;color:#000;">Digest algorithm</div>
<div class="t" style="left:59.30px;top:169.40px;font-size:16.3px;color:#000;transform:scaleX(0.9554);transform-origin:0 0;">My Own SHA1 Driver Signer</div>
<div class="t" style="left:265.00px;top:169.40px;font-size:16.3px;color:#000;transform:scaleX(0.9340);transform-origin:0 0;">sha1</div>
<div class="a" style="left:57px;top:190px;width:515px;height:24px;background:#f0f0f0"></div>
<div class="t" style="left:59.30px;top:193.30px;font-size:16.3px;color:#000;transform:scaleX(0.9422);transform-origin:0 0;">My Own Driver Signer</div>
<div class="t" style="left:265.00px;top:193.30px;font-size:16.3px;color:#000;transform:scaleX(0.9726);transform-origin:0 0;">sha256</div>
<div class="a" style="left:302px;top:726px;width:86px;height:32px;background:#e1e1e1;border:1px solid #adadad"></div>
</div>
<div class="win" style="left:947px;top:25px;width:602px;height:698px">
<div class="a" style="left:0px;top:0px;width:600px;height:44px;background:#fff"></div>
<div class="t" style="left:12.10px;top:12.92px;font-size:19px;color:#999;transform:scaleX(0.9242);transform-origin:0 0;">Digital Signature Details</div>
<div class="a" style="left:9px;top:80px;width:583px;height:563px;background:#fff;border:1px solid #d9d9d9"></div>
<div class="a" style="left:9px;top:54px;width:70px;height:27px;background:#fff;border:1px solid #d9d9d9;border-bottom:none"></div>
<div class="a" style="left:78px;top:56px;width:78px;height:24px;background:#f0f0f0;border:1px solid #d9d9d9;border-bottom:none"></div>
<div class="t" style="left:17.90px;top:59.31px;font-size:17px;color:#000;transform:scaleX(0.8582);transform-origin:0 0;">General</div>
<div class="t" style="left:84.00px;top:60.51px;font-size:17px;color:#000;transform:scaleX(0.8901);transform-origin:0 0;">Advanced</div>
<svg class="a" style="left:35px;top:92px" width="47" height="48" viewBox="0 0 47 48"><path d="M0.75 0.75H27.5L37.5 10.75V45.25H0.75Z" fill="#f8f8f8" stroke="#a4a4a4" stroke-width="1.5"/><path d="M27.5 0.75V9.5H37.5" fill="#ececec" stroke="#a4a4a4" stroke-width="1.2"/><path d="M38.2 11V46H1.5" fill="none" stroke="#c8c8c8" stroke-width="1"/><path d="M8 11H23M8 15.5H30.7M8 20.2H30.7M8 24.7H30.7" stroke="#4f86d2" stroke-width="1.8"/><path d="M22.00 35.50 L27.36 33.92 L23.95 30.26Z" fill="#f2c08a"/><path d="M22.00 35.50 L23.93 34.93 L22.70 33.61Z" fill="#333"/><path d="M27.36 33.92 L40.52 21.63 L37.11 17.98 L23.95 30.26Z" fill="#e8b830" stroke="#b88a20" stroke-width="0.5"/><path d="M25.66 32.09 L38.81 19.81 L37.11 17.98 L23.95 30.26Z" fill="#f6e07a"/><path d="M40.52 21.63 L42.35 19.93 L38.94 16.27 L37.11 17.98Z" fill="#3c8a4a"/><path d="M42.35 19.93 L46.21 16.33 L42.79 12.67 L38.94 16.27Z" fill="#d85a5a"/><path d="M3.5 36.5C6 35 9 33 11 31C13 29 12 27 10.5 30C9 33 8 38 6 41C5 43 7 42 9 38C10 36 11 37 13 36C15 35 15 37 17 36.5C19 36 20 35.5 22 35.5" fill="none" stroke="#666" stroke-width="1.3"/><path d="M7 40H30.7" stroke="#666" stroke-width="1.6"/></svg>
<div class="t" style="left:103.50px;top:98.19px;font-size:17.5px;color:#000;font-weight:bold;transform:scaleX(0.9940);transform-origin:0 0;">Digital Signature Information</div>
<div class="t" style="left:103.50px;top:124.05px;font-size:16.6px;color:#000;transform:scaleX(0.9576);transform-origin:0 0;">This digital signature is OK.</div>
<div class="a" style="left:33px;top:196px;width:559px;height:478px;border:1px solid #dcdcdc"></div>
<div class="a" style="left:39px;top:186px;width:138px;height:20px;background:#fff"></div>
<div class="t" style="left:42.00px;top:189.55px;font-size:16.6px;color:#000;transform:scaleX(0.9725);transform-origin:0 0;">Signer information</div>
<div class="t" style="left:51.60px;top:222.30px;font-size:16.3px;color:#000;transform:scaleX(0.9312);transform-origin:0 0;">Name:</div>
<div class="t" style="left:51.60px;top:265.20px;font-size:16.3px;color:#000;transform:scaleX(0.9658);transform-origin:0 0;">E-mail:</div>
<div class="t" style="left:51.60px;top:306.80px;font-size:16.3px;color:#000;transform:scaleX(0.9850);transform-origin:0 0;">Signing time:</div>
<div class="a" style="left:195px;top:221px;width:397px;height:27px;background:#fff;border-top:2px solid #696969;border-left:2px solid #a0a0a0;border-bottom:1px solid #e3e3e3"></div>
<div class="t" style="left:197.70px;top:224.80px;font-size:16.3px;color:#000;transform:scaleX(0.9811);transform-origin:0 0;">My Own Driver Signer</div>
<div class="a" style="left:195px;top:264px;width:397px;height:27px;background:#fff;border-top:2px solid #696969;border-left:2px solid #a0a0a0;border-bottom:1px solid #e3e3e3"></div>
<div class="t" style="left:197.70px;top:267.80px;font-size:16.3px;color:#000;transform:scaleX(0.9665);transform-origin:0 0;">Not available</div>
<div class="a" style="left:195px;top:306px;width:397px;height:27px;background:#fff;border-top:2px solid #696969;border-left:2px solid #a0a0a0;border-bottom:1px solid #e3e3e3"></div>
<div class="t" style="left:197.70px;top:309.90px;font-size:16.3px;color:#000;transform:scaleX(0.9665);transform-origin:0 0;">Not available</div>
</div>
<div class="win" style="left:1314px;top:40px;width:602px;height:745px">
<div class="a" style="left:0px;top:0px;width:600px;height:44px;background:#fff"></div>
<svg class="a" style="left:11px;top:12px" width="25" height="21" viewBox="0 0 25 21"><rect x="0.5" y="0.5" width="23.5" height="19" fill="#f3e2c8"/><rect x="2" y="2" width="20.5" height="16" fill="#fff" stroke="#e9b46e" stroke-width="2"/><path d="M1 19.5H24" stroke="#c8c8c8" stroke-width="1"/><path d="M11.5 4.5H20M11.5 6.5H20M14 10H20M14 12H20" stroke="#d4d4d4" stroke-width="1"/><path d="M5.5 15L4 20L6.2 19.4L8 15.5ZM8.5 15.5L10.3 19.4L12.5 20L11 15Z" fill="#2f6ae0"/><circle cx="8" cy="11.7" r="4.2" fill="#d9a010"/><circle cx="7.5" cy="11" r="1.3" fill="#f4d060"/></svg>
<div class="t" style="left:40.40px;top:12.99px;font-size:19.5px;color:#999;transform:scaleX(0.8781);transform-origin:0 0;">Certificate</div>
<svg class="a" style="left:568px;top:14px" width="16" height="16" viewBox="0 0 16 16"><path d="M0.5 0.5L15.5 15.5M15.5 0.5L0.5 15.5" stroke="#333" stroke-width="1.1"/></svg>
<div class="a" style="left:9px;top:80px;width:580px;height:610px;background:#fff;border:1px solid #d9d9d9"></div>
<div class="a" style="left:11px;top:56px;width:65px;height:25px;background:#f0f0f0;border:1px solid #d9d9d9;border-bottom:none"></div>
<div class="a" style="left:76px;top:56px;width:59px;height:25px;background:#f0f0f0;border:1px solid #d9d9d9;border-bottom:none"></div>
<div class="a" style="left:135px;top:54px;width:135px;height:28px;background:#fff;border:1px solid #d9d9d9;border-bottom:none"></div>
<div class="t" style="left:17.30px;top:61.14px;font-size:17.2px;color:#000;transform:scaleX(0.8662);transform-origin:0 0;">General</div>
<div class="t" style="left:83.00px;top:61.14px;font-size:17.2px;color:#000;transform:scaleX(0.8842);transform-origin:0 0;">Details</div>
<div class="t" style="left:142.40px;top:58.54px;font-size:17.2px;color:#000;transform:scaleX(0.9093);transform-origin:0 0;">Certification Path</div>
<div class="a" style="left:29px;top:108px;width:545px;height:394px;border:1px solid #dcdcdc"></div>
<div class="a" style="left:35px;top:99px;width:127px;height:20px;background:#fff"></div>
<div class="t" style="left:38.40px;top:100.94px;font-size:17.2px;color:#000;transform:scaleX(0.9219);transform-origin:0 0;">Certification path</div>
<div class="a" style="left:42px;top:125px;width:515px;height:354px;background:#fff;border:1px solid #828790"></div>
<svg class="a" style="left:47px;top:132px" width="17" height="16" viewBox="0 0 17 16"><rect x="0.5" y="0.5" width="15" height="11" fill="#fbf7ee" stroke="#8a7050"/><path d="M3 4H12M3 7H9" stroke="#6080d0" stroke-width="1"/><circle cx="11" cy="10" r="3" fill="#e0a020"/><path d="M9 12L8.5 15.5L10.5 14M12 12L13 15.5L11.5 14" fill="#2050c0"/></svg>
<div class="t" style="left:68.30px;top:130.24px;font-size:17.2px;color:#000;transform:scaleX(0.9476);transform-origin:0 0;">My Own Root Authority</div>
<div class="a" style="left:54px;top:147px;width:1px;height:15px;border-left:1px dotted #808080"></div>
<div class="a" style="left:54px;top:161px;width:12px;height:1px;border-top:1px dotted #808080"></div>
<svg class="a" style="left:66px;top:154px" width="17" height="16" viewBox="0 0 17 16"><rect x="0.5" y="0.5" width="15" height="11" fill="#fbf7ee" stroke="#8a7050"/><path d="M3 4H12M3 7H9" stroke="#6080d0" stroke-width="1"/><circle cx="11" cy="10" r="3" fill="#e0a020"/><path d="M9 12L8.5 15.5L10.5 14M12 12L13 15.5L11.5 14" fill="#2050c0"/></svg>
<div class="t" style="left:87.00px;top:152.24px;font-size:17.2px;color:#000;transform:scaleX(0.9594);transform-origin:0 0;">My Own Testing Authority</div>
<div class="a" style="left:73px;top:169px;width:1px;height:15px;border-left:1px dotted #808080"></div>
<div class="a" style="left:73px;top:183px;width:12px;height:1px;border-top:1px dotted #808080"></div>
<div class="a" style="left:104px;top:171px;width:160px;height:22px;background:#f0f0f0"></div>
<svg class="a" style="left:85px;top:176px" width="17" height="16" viewBox="0 0 17 16"><rect x="0.5" y="0.5" width="15" height="11" fill="#fbf7ee" stroke="#8a7050"/><path d="M3 4H12M3 7H9" stroke="#6080d0" stroke-width="1"/><circle cx="11" cy="10" r="3" fill="#e0a020"/><path d="M9 12L8.5 15.5L10.5 14M12 12L13 15.5L11.5 14" fill="#2050c0"/></svg>
<div class="t" style="left:106.20px;top:174.14px;font-size:17.2px;color:#000;transform:scaleX(0.9256);transform-origin:0 0;">My Own Driver Signer</div>
<div class="a" style="left:39px;top:546px;width:535px;height:79px;background:#fff;border-top:1px solid #646464;border-left:1px solid #a0a0a0;border-right:1px solid #e3e3e3;border-bottom:1px solid #e3e3e3"></div>
<div class="a" style="left:478px;top:702px;width:113px;height:31px;background:#e1e1e1;border:1px solid #adadad"></div>
</div>
<div class="a" style="left:24px;top:326px;width:908px;height:646px;background:#0078d7;box-shadow:0 7px 18px 0 rgba(0,0,0,.27)">
<svg class="a" style="left:12px;top:13px" width="24" height="19" viewBox="0 0 24 19"><rect x="0.5" y="0.5" width="23" height="18" fill="#000" stroke="#8c8c8c"/><rect x="1" y="1" width="22" height="3" fill="#bdbdbd"/><rect x="16" y="1.5" width="1" height="1" fill="#555"/><rect x="18" y="1.5" width="1" height="1" fill="#555"/><rect x="20" y="1.5" width="1" height="1" fill="#555"/><text x="3" y="14" font-family="Liberation Mono" font-size="9.5" font-weight="bold" fill="#e8e8e8" letter-spacing="-1">C:\</text><rect x="16.5" y="12.5" width="4" height="1.5" fill="#e8e8e8"/></svg>
<div class="t" style="left:41.30px;top:14.86px;font-size:18px;color:#fff;transform:scaleX(0.9860);transform-origin:0 0;">C:\WINDOWS\system32\cmd.exe</div>
<div class="a" style="left:724px;top:22px;width:15px;height:1px;background:#fff"></div>
<div class="a" style="left:794px;top:15px;width:15px;height:15px;border:1px solid #fff"></div>
<svg class="a" style="left:865px;top:15px" width="16" height="16" viewBox="0 0 16 16"><path d="M0.5 0.5L15.5 15.5M15.5 0.5L0.5 15.5" stroke="#fff" stroke-width="1.2"/></svg>
<div class="a" style="left:1px;top:45px;width:880px;height:600px;background:#000"></div>
<div class="a" style="left:881px;top:45px;width:26px;height:600px;background:#f0f0f0;border-left:1px solid #fff"></div>
<div class="a" style="left:882px;top:71px;width:25px;height:26px;background:#cdcdcd"></div>
<svg class="a" style="left:889px;top:55px" width="12" height="10" viewBox="0 0 12 10"><path d="M0 5.75L5.75 0L11.5 5.75V9.8L5.75 4.05L0 9.8Z" fill="#5f5f5f"/></svg>
<svg class="a" style="left:889px;top:628px" width="12" height="10" viewBox="0 0 12 10"><path d="M0 4.05L5.75 9.8L11.5 4.05V0L5.75 5.75L0 0Z" fill="#5f5f5f"/></svg>
<div class="con" style="left:1px;top:46.67px">Microsoft Windows [Version 10.0.16299.492]
(c) 2017 Microsoft Corporation. All rights reserved.

C:\Users\Public&gt;sc query SelfSign

SERVICE_NAME: SelfSign
        TYPE               : 1  KERNEL_DRIVER
        STATE              : 4  RUNNING
                                (STOPPABLE, NOT_PAUSABLE, IGNORES_SHUTDOWN)
        WIN32_EXIT_CODE    : 0  (0x0)
        SERVICE_EXIT_CODE  : 0  (0x0)
        CHECKPOINT         : 0x0
        WAIT_HINT          : 0x0

C:\Users\Public&gt;selfsign
Device \\.\SelfSign is present
API version is 1.0

C:\Users\Public&gt;</div>
</div>
<div class="a" style="left:968px;top:384px;width:908px;height:645px;background:#fff;border:1px solid #9a9a9a;box-shadow:0 0 16px 1px rgba(0,0,0,.19)">
<svg class="a" style="left:11px;top:12px" width="24" height="19" viewBox="0 0 24 19"><rect x="0.5" y="0.5" width="23" height="18" fill="#000" stroke="#8c8c8c"/><rect x="1" y="1" width="22" height="3" fill="#bdbdbd"/><rect x="16" y="1.5" width="1" height="1" fill="#555"/><rect x="18" y="1.5" width="1" height="1" fill="#555"/><rect x="20" y="1.5" width="1" height="1" fill="#555"/><text x="3" y="14" font-family="Liberation Mono" font-size="9.5" font-weight="bold" fill="#e8e8e8" letter-spacing="-1">C:\</text><rect x="16.5" y="12.5" width="4" height="1.5" fill="#e8e8e8"/></svg>
<div class="t" style="left:40.90px;top:14.36px;font-size:18px;color:#999;transform:scaleX(1.0150);transform-origin:0 0;">Administrator: Command Prompt</div>
<div class="a" style="left:724px;top:21px;width:15px;height:1px;background:#888"></div>
<div class="a" style="left:793px;top:14px;width:15px;height:15px;border:1px solid #888"></div>
<svg class="a" style="left:864px;top:14px" width="15" height="15" viewBox="0 0 15 15"><path d="M0.5 0.5L14.5 14.5M14.5 0.5L0.5 14.5" stroke="#888" stroke-width="1.1"/></svg>
<div class="a" style="left:0px;top:44px;width:880px;height:600px;background:#000"></div>
<div class="a" style="left:880px;top:44px;width:26px;height:600px;background:#f0f0f0"></div>
<div class="a" style="left:881px;top:70px;width:24px;height:26px;background:#cdcdcd"></div>
<svg class="a" style="left:888px;top:54px" width="12" height="10" viewBox="0 0 12 10"><path d="M0 5.75L5.75 0L11.5 5.75V9.8L5.75 4.05L0 9.8Z" fill="#5f5f5f"/></svg>
<svg class="a" style="left:888px;top:627px" width="12" height="10" viewBox="0 0 12 10"><path d="M0 4.05L5.75 9.8L11.5 4.05V0L5.75 5.75L0 0Z" fill="#5f5f5f"/></svg>
<div class="con" style="left:0;top:45.67px">(c) 2017 Microsoft Corporation. All rights reserved.

C:\WINDOWS\system32&gt;powershell
Windows PowerShell
Copyright (C) Microsoft Corporation. All rights reserved.

PS C:\WINDOWS\system32&gt; <span style="color:#ff0">Confirm-SecureBootUEFI</span>
True
PS C:\WINDOWS\system32&gt; <span style="color:#0f0">exit</span>

C:\WINDOWS\system32&gt;sc qc SelfSign
[SC] QueryServiceConfig SUCCESS

SERVICE_NAME: SelfSign
        TYPE               : 1  KERNEL_DRIVER
        START_TYPE         : 0   BOOT_START
        ERROR_CONTROL      : 1   NORMAL
        BINARY_PATH_NAME   : \SystemRoot\system32\drivers\selfsign.sys
        LOAD_ORDER_GROUP   : Boot Bus Extender
        TAG                : 0
        DISPLAY_NAME       : SelfSign
        DEPENDENCIES       :
        SERVICE_START_NAME :

C:\WINDOWS\system32&gt;</div>
</div>
</body></html>
